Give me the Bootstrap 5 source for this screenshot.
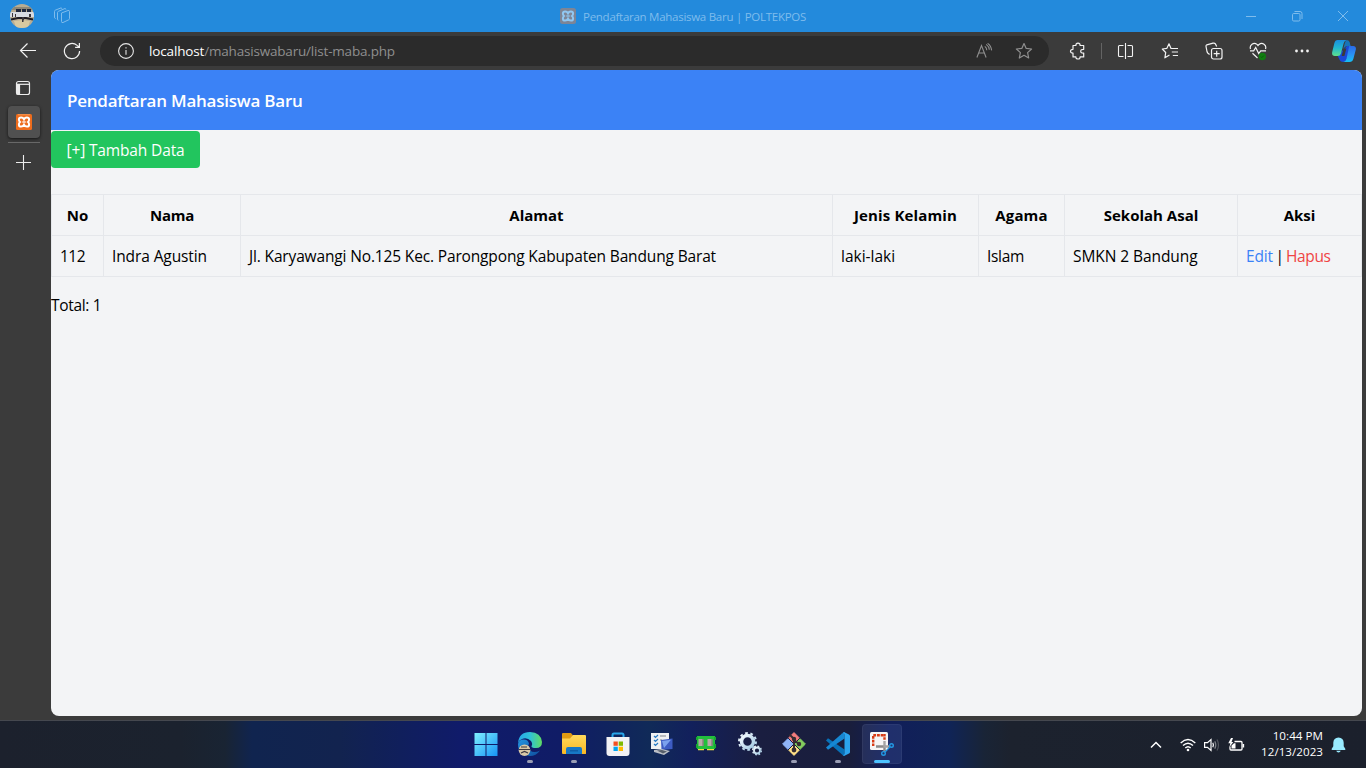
<!DOCTYPE html>
<html lang="id">
<head>
<meta charset="utf-8">
<meta name="viewport" content="width=device-width, initial-scale=1">
<title>Pendaftaran Mahasiswa Baru | POLTEKPOS</title>
<link href="https://cdn.jsdelivr.net/npm/bootstrap@5.3.0/dist/css/bootstrap.min.css" rel="stylesheet">
<style>
body{font-family:"Open Sans","Noto Sans",sans-serif;background:#3b3b3b;color:#000;height:768px;overflow:hidden}
svg{display:block;flex:none}
.titlebar{height:32px;background:#238adc;color:#7fbcec;padding-left:10px}
.workspaces{margin-left:19px}
.title-group{margin-left:489px}
.title-text{font-size:11.5px;letter-spacing:-.272px;line-height:16px;margin-left:7px;padding-top:1px}
.win-btn{width:46px}
.toolbar{height:38px;padding-left:6px;color:#f2f2f2}
.tool{width:44px;flex:none;display:flex;justify-content:center;align-items:center}
.address{margin:0 7px 0 6px;width:949px;height:30px;background:#2b2b2b;color:#8f8f8f;flex:none}
.info-icon{margin-left:18px}
.star-icon{margin:0 16px 0 22px}
.address-text{font-size:13.5px;letter-spacing:-.19px;line-height:18px;margin-left:15px}
.address-text b{font-weight:400;color:#fff;letter-spacing:-.15px}
.tool-sep{width:1px;height:16px;background:#646464;margin:0 2px 0 1px}
.copilot-cell{width:40px}
.stage{height:650px}
.tabs-col{width:51px;color:#ececec;padding-right:5px}
.tab-cell{height:36px}
.tab-on{width:32px;height:32px;background:#505050;box-shadow:0 1px 3px #151515;border-radius:4px;margin-left:2px}
.tab-rule{width:32px;height:1px;background:#686868;margin:4px 0 11px 2px}
.page{width:1311px;height:646px;background:#f3f4f6;border-radius:8px;overflow:hidden;font-size:15.5px;line-height:24px}
.page-head{height:60px;background:#3b82f6;font-size:17px;letter-spacing:-.225px;line-height:24px;padding-top:1px}
.btn-add{--bs-btn-color:#fff;--bs-btn-bg:#22c55e;--bs-btn-border-color:#22c55e;height:37px;width:149px;margin-top:1px;padding:1px 0 0;font-size:15.5px;letter-spacing:-.144px;line-height:37px;border:0;border-radius:4px}
.maba{table-layout:fixed;border-collapse:collapse;width:1311px;margin-top:26px}
.maba th,.maba td{border:1px solid #e5e7eb;padding:8px;height:41px;white-space:nowrap}
.maba th{text-align:center;font-size:15px}
.c-no{width:52px}.c-nama{width:137px}.c-alamat{width:592px}.c-jk{width:146px}.c-agama{width:86px}.c-asal{width:173px}
.ls-1{letter-spacing:-.105px}
.ls-2{letter-spacing:-.152px}
.ls-3{letter-spacing:-.3px}
.ls-4{letter-spacing:-.53px}
.ls-5{letter-spacing:-.076px}
.ls-w{letter-spacing:.135px}
.maba .act{word-spacing:-1.2px;letter-spacing:-.384px}
.act-edit{color:#3b82f6;text-decoration:none;letter-spacing:-.137px}
.act-del{color:#ef4444;text-decoration:none;letter-spacing:-.384px}
.total{margin-top:16px;letter-spacing:-.33px}
.taskbar{height:48px;border-top:1px solid #45484f;color:#fff;background:linear-gradient(90deg,#1c212d 0,#1b222e 180px,#192433 225px,#10244f 252px,#12234f 340px,#101f5c 400px,#101b6a 460px,#101c66 560px,#10255c 620px,#102a58 650px,#12205c 690px,#1a1e40 760px,#191e3c 850px,#111e5a 890px,#102456 950px,#192436 985px,#1c222e 1010px,#1b202c 100%)}
.apps{margin-left:464px}
.app{width:44px;height:47px;padding-top:11px;display:flex;flex-direction:column;align-items:center}
.app-tile{width:40px;height:40px;margin:3px 2px 0;padding-top:8px;background:rgba(150,170,240,.12);border-radius:4px;box-shadow:inset 0 0 0 1px rgba(255,255,255,.05)}
.dot{width:6px;height:3px;border-radius:2px;background:#9a9eb4;margin-top:4px;flex:none}
.dot-on{width:16px;background:#4cc2ff}
.tray{padding-right:20px}
.wifi{margin-left:18px}
.clock{font-size:11.6px;line-height:16px;text-align:right;width:68px;margin:-1px 8px 0 10px;letter-spacing:.04px}
</style>
</head>
<body>
<svg width="0" height="0" class="position-absolute"><defs>
<linearGradient id="win" x1="0" y1="0" x2="1" y2="1"><stop stop-color="#7ff0ff"/><stop offset="1" stop-color="#1694f5"/></linearGradient>
<linearGradient id="edge1" x1="0" y1="0" x2="1" y2="0"><stop stop-color="#27a8e8"/><stop offset=".5" stop-color="#2fc1d8"/><stop offset="1" stop-color="#5fdc62"/></linearGradient>
<linearGradient id="edge2" x1="0" y1="0" x2="1" y2="1"><stop stop-color="#2394e0"/><stop offset="1" stop-color="#0e4c9c"/></linearGradient>
<linearGradient id="fold" x1="0" y1="0" x2="0" y2="1"><stop stop-color="#ffd95c"/><stop offset="1" stop-color="#fbb823"/></linearGradient>
<linearGradient id="cp1" x1="0" y1="0" x2="0" y2="1"><stop stop-color="#1a8fe0"/><stop offset=".5" stop-color="#22b8d0"/><stop offset="1" stop-color="#5fe08c"/></linearGradient>
<linearGradient id="cp2" x1="0" y1="0" x2="0" y2="1"><stop stop-color="#2a6ae8"/><stop offset=".5" stop-color="#2b8ff5"/><stop offset="1" stop-color="#16c0f4"/></linearGradient>
<linearGradient id="gear" x1="0" y1="0" x2="1" y2="1"><stop stop-color="#f4faff"/><stop offset="1" stop-color="#a6cbe4"/></linearGradient>
<clipPath id="round"><circle cx="12" cy="12" r="12"/></clipPath>
<g id="xampp" fill="none" stroke="currentColor"><path d="M8 5.300Q7 3.400 5.200 3.400 2.900 3.400 2.900 5.600 2.900 7.100 4 8 2.900 8.900 2.900 10.400 2.900 12.600 5.200 12.600 7 12.600 8 10.700 9 12.600 10.800 12.600 13.100 12.600 13.100 10.400 13.100 8.900 12 8 13.100 7.100 13.100 5.600 13.100 3.400 10.800 3.400 9 3.400 8 5.300z" stroke-width="2"/><path d="M6.300 8h3.400" stroke-width="1.300"/></g>
</defs></svg>

<header class="titlebar d-flex align-items-center">
  <svg width="24" height="24" viewBox="0 0 24 24"><g clip-path="url(#round)"><path fill="#b9ad93" d="M0 0h24v24H0z"/><path fill="#8e8878" d="M0 3h24v3H0z"/><path fill="#d8dbe2" d="M0 8h24v5H0z"/><path fill="#20283e" d="M6 5h5v3H6zM12 5h4v3h-4zM17 5h4v3h-4z"/><path d="M1 15.500l7-1.500h8l7 1.500" fill="none" stroke="#201b22" stroke-width="1.800"/><path fill="#39343a" d="M2 9h1v4H2zM5 10h1v3H5zM19 10h2v3h-2zM12 13h2v5h-2z"/><path fill="#d8c9a0" d="M4 17l8-1 8 1-2 7H6z"/><path fill="#39343a" d="M12 15h1.500v3H12z"/></g></svg>
  <svg class="workspaces" width="18" height="18" viewBox="0 0 18 18" fill="none" stroke="currentColor"><path d="M8.500 6l6.500-2.500q1.500-.4 1.500 1v7q0 1-.8 1.300l-5.700 2.700q-1.500.5-1.500-1zM5.500 13.200l-1-.5V5.500q0-.8.8-1.100L12 1.500l1.200.9M2.700 11.500l-1.200-.7V4.300q0-.8.8-1.100L8 .9l1.200.7"/></svg>
  <div class="title-group d-flex align-items-center">
    <svg width="16" height="16" viewBox="0 0 16 16"><rect width="16" height="16" rx="2.500" fill="#7d8596"/><g color="#91c8f2"><use href="#xampp"/></g></svg>
    <span class="title-text text-nowrap">Pendaftaran Mahasiswa Baru | POLTEKPOS</span>
  </div>
  <div class="d-flex ms-auto">
    <div class="win-btn d-flex justify-content-center"><svg width="12" height="12" fill="none" stroke="currentColor"><path d="M1 6.500h10"/></svg></div>
    <div class="win-btn d-flex justify-content-center"><svg width="12" height="12" fill="none" stroke="currentColor"><rect x="1.500" y="3.500" width="7.500" height="7.500" rx="1.200"/><path d="M3.500 1.500h5.500q2 0 2 2V9"/></svg></div>
    <div class="win-btn d-flex justify-content-center"><svg width="12" height="12" fill="none" stroke="currentColor"><path d="M1 1l10 10M11 1L1 11"/></svg></div>
  </div>
</header>

<nav class="toolbar d-flex align-items-center">
  <div class="tool"><svg width="18" height="18" viewBox="0 0 18 18" fill="none" stroke="currentColor" stroke-width="1.200"><path d="M17 8.500H1.500M8.500 1.500l-7 7 7 7"/></svg></div>
  <div class="tool"><svg width="18" height="18" viewBox="0 0 18 18" fill="none" stroke="currentColor" stroke-width="1.200"><path d="M16.600 9a7.600 7.600 0 1 1-2.500-5.600L16 5M16.400 1v4.300h-4.300"/></svg></div>
  <div class="address rounded-pill d-flex align-items-center">
    <svg class="info-icon" width="16" height="16" viewBox="0 0 16 16" fill="none" stroke="#e6e6e6" stroke-width="1.100"><circle cx="8" cy="8" r="7.400"/><path d="M8 7v4.700M8 4.300v1.300"/></svg>
    <span class="address-text text-nowrap"><b>localhost</b>/mahasiswabaru/list-maba.php</span>
    <svg class="ms-auto" width="17" height="16" viewBox="0 0 17 16" fill="none" stroke="currentColor" stroke-width="1.100"><path d="M.9 14.500L5.500 2.500l4.600 12M2.500 10h6M8.800 3.400q1.900 1.300 2 3.800M10.200 1.400q2.900 2 3.100 5.300M11.600.4q3.500 2.300 4 7"/></svg>
    <svg class="star-icon" width="18" height="18" viewBox="0 0 18 18" fill="none" stroke="currentColor" stroke-width="1.200"><path d="M9 1.500l2.200 4.900 5.400.6-4 3.600 1.100 5.400L9 13.300 4.300 16l1.100-5.400-4-3.600 5.400-.6z" stroke-linejoin="round"/></svg>
  </div>
  <div class="tool"><svg width="18" height="18" viewBox="0 0 18 18" fill="none" stroke="currentColor" stroke-width="1.200"><path d="M4 3.500h2.900q-.1-2.300 2.100-2.300t2.100 2.300h3.600v3.800q-3-.2-3 1.900t3 1.900v3.800h-3.600q0 2.100-2.100 2.100t-2.100-2.100H4v-3.800q-2.500-.1-2.500-1.900T4 7.300z" stroke-linejoin="round"/></svg></div>
  <div class="tool-sep"></div>
  <div class="tool"><svg width="18" height="18" viewBox="0 0 18 18" fill="none" stroke="currentColor" stroke-width="1.100"><path d="M6.500 3.500h-4q-1 0-1 1v9q0 1 1 1h4M10.500 3.500h4q1 0 1 1v9q0 1-1 1h-4M8.500 1v16"/></svg></div>
  <div class="tool"><svg width="18" height="18" viewBox="0 0 18 18" fill="none" stroke="currentColor" stroke-width="1.200"><path d="M11.500 6.500H10L8 1.800 5.900 6.300 1.300 7l3.400 3.500-.8 5.300L8.500 13M11.500 6.500H17M10.800 10H17M11.800 13.500H17" stroke-linejoin="round"/></svg></div>
  <div class="tool"><svg width="18" height="18" viewBox="0 0 18 18" fill="none" stroke="currentColor" stroke-width="1.200"><rect x="6.500" y="6.500" width="10.500" height="10.500" rx="2"/><path d="M11.700 8.700v6M8.700 11.700h6M4.600 12.500L3 11.200Q2.300 10.600 2 9.500L1 4.300q-.2-1 .8-1.500L8 1.200q1.600-.4 2.400.7l1.300 2.600"/></svg></div>
  <div class="tool"><svg width="18" height="20" viewBox="0 0 18 20" fill="none" stroke="currentColor" stroke-width="1.200"><path d="M1.500 8Q.5 5 3 3.200t5 .2L9 4.500l1-1.100q2.500-1.800 5-.2T16.500 8M1 9.800h3.700l2-3.300 3 6 2-2.700H17M3.500 12.200L8.500 17"/><circle cx="13.300" cy="15.500" r="3.700" fill="#107c10" stroke="none"/><path d="M11.800 15.600l1 1 2-2" stroke="#075a07" stroke-width=".9"/></svg></div>
  <div class="tool"><svg width="16" height="4" fill="currentColor"><circle cx="2.500" cy="2" r="1.400"/><circle cx="8" cy="2" r="1.400"/><circle cx="13.500" cy="2" r="1.400"/></svg></div>
  <div class="copilot-cell d-flex justify-content-center"><svg width="24" height="24" viewBox="0 0 24 24"><path fill="#1a49d8" d="M5.500 16.500L9 13l7-7h2.500l-3.700 13.800q-.8 3.200-3.600 3.200-3 0-4-3z"/><path fill="#3b3b3b" d="M11.600 9.500h2.800l-2 7.500H9.600z"/><path fill="url(#cp2)" d="M17.200 7h4q3 .2 2.700 3.200l-2.500 9.600Q20.500 23 17.500 23h-6q2.400-.6 3-3.200z"/><path fill="url(#cp1)" d="M5.500 1h9.300q-2.500.8-3.200 3.400L9 14.400Q8.200 17 5.500 17H2.800Q-.2 16.700.1 13.600L2.400 4Q3.200 1 5.500 1z"/><path fill="#1874b8" d="M14.800 1q2.400 0 3 2.500L18.500 7h-3q-2.500 0-4.300 3l1.700-6Q13.500 1.500 14.800 1z"/></svg></div>
</nav>

<div class="stage d-flex">
  <aside class="tabs-col d-flex flex-column align-items-center">
    <div class="tab-cell d-flex align-items-center"><svg width="16" height="16" viewBox="0 0 16 16" fill="none" stroke="currentColor" stroke-width="1.200"><rect x="1.500" y="1.500" width="13" height="13" rx="2"/><path d="M2 4.300h12.500"/><path fill="currentColor" d="M2 4.500h2.500v9.700H2z"/></svg></div>
    <div class="tab-on d-flex align-items-center justify-content-center"><svg width="16" height="16" viewBox="0 0 16 16"><rect width="16" height="16" rx="1.500" fill="#ee6c1c"/><path d="M2 .8h12" stroke="#f9a468" stroke-width=".8"/><g color="#fff"><use href="#xampp"/></g></svg></div>
    <div class="tab-rule"></div>
    <svg width="16" height="16" fill="none" stroke="currentColor" stroke-width="1.100"><path d="M8.500 1v15M1 8.500h15"/></svg>
  </aside>
  <main class="page">
    <div class="page-head d-flex align-items-center px-3 text-white fw-semibold">Pendaftaran Mahasiswa Baru</div>
    <a class="btn btn-add d-block" href="#">[+] Tambah Data</a>
    <table class="maba">
      <colgroup><col class="c-no"><col class="c-nama"><col class="c-alamat"><col class="c-jk"><col class="c-agama"><col class="c-asal"><col></colgroup>
      <thead><tr><th>No</th><th class="ls-3">Nama</th><th>Alamat</th><th class="ls-w">Jenis Kelamin</th><th class="ls-w">Agama</th><th>Sekolah Asal</th><th>Aksi</th></tr></thead>
      <tbody><tr><td class="ls-4">112</td><td class="ls-1">Indra Agustin</td><td class="ls-2">Jl. Karyawangi No.125 Kec. Parongpong Kabupaten Bandung Barat</td><td>laki-laki</td><td class="ls-3">Islam</td><td class="ls-5">SMKN 2 Bandung</td><td class="act"><a class="act-edit" href="#">Edit</a> | <a class="act-del" href="#">Hapus</a></td></tr></tbody>
    </table>
    <p class="total mb-0">Total: 1</p>
  </main>
</div>

<footer class="taskbar d-flex">
  <div class="apps d-flex">
    <div class="app"><svg width="24" height="24"><path fill="url(#win)" d="M.5 1h11v11H.5zM12.500 1h11v11h-11zM.5 13h11v11H.5zM12.500 13h11v11h-11z" /></svg></div>
    <div class="app"><svg width="24" height="24" viewBox="0 0 24 24"><path fill="url(#edge2)" d="M0 12Q1 7 6 7.500q4 0 5 4-2 4 1 7 4 3 10 0-4 5.500-10 5.500Q0 23 0 12z"/><path fill="url(#edge1)" d="M0 11Q1 0 12 0q11 .5 12 10 0 6-6 6-5 0-4.500-2Q15 12 13 9 9 5 4 7 1 8 0 11z"/><circle cx="6.500" cy="18.200" r="5.800" fill="#d8c8a7"/><path d="M1 17.500h11M3 15h6M3 21l3.500-1.500L10 21" stroke="#3c3840" stroke-width="1.200" fill="none"/></svg><span class="dot"></span></div>
    <div class="app"><svg width="24" height="24"><path fill="#e09a12" d="M1 1h8l2 2.500V9H0V2q0-1 1-1z"/><path fill="url(#fold)" d="M0 6.500h8L11 3h12q1 0 1 1v17.500q0 .5-1 .5H1q-1 0-1-1z"/><path fill="#1778c6" d="M4 22v-5q0-2 2-2h12q2 0 2 2v5z"/><path fill="#0f5ea8" d="M8 18h8v1.500H8z"/></svg><span class="dot"></span></div>
    <div class="app"><svg width="24" height="24"><path d="M6.500 6V3q0-1.500 1.500-1.500h8q1.500 0 1.500 1.500v3" fill="none" stroke="#29a7ea" stroke-width="2"/><path fill="#f2f2f4" d="M.5 5h23v16q0 3-3 3h-17q-3 0-3-3z"/><path fill="#f25022" d="M7.500 9.500h4.300v4.300H7.500z"/><path fill="#7fba00" d="M12.700 9.500H17v4.300h-4.300z"/><path fill="#00a4ef" d="M7.500 14.700h4.300V19H7.500z"/><path fill="#ffb900" d="M12.700 14.700H17V19h-4.300z"/></svg></div>
    <div class="app"><svg width="24" height="24"><path fill="#eef0f2" d="M1 1h18v16H1z"/><path d="M4 4l1.500 1.500L8 3M4 8l1.500 1.500L8 7M4 12l1.500 1.500L8 11" fill="none" stroke="#287ac2" stroke-width="1.200"/><path d="M10 4h6M10 8h2" stroke="#80858b"/><path fill="#3d5bc2" d="M11 8l11.500-1.500V17l-11 1z"/><path fill="#7ba1ee" d="M12 9l9-1.200L14 16z"/><path fill="#b9bec5" d="M4 18l8-1 8 2-6 4-10-3z"/><path fill="#555e6a" d="M7 18.500l5-.5 5 1.500-4 2z"/></svg></div>
    <div class="app"><svg width="24" height="24"><path fill="#22c03c" d="M3 4h18v13H3z"/><path fill="#17a832" d="M2 5h2v3H2zM2 12h2v4H2zM20 5h2v3h-2zM20 12h2v4h-2z"/><path fill="#b7aaa7" d="M4.500 7h5v7h-5zM13.500 7h5v7h-5z"/><path fill="#776f6c" d="M8.500 7h1v7h-1zM17.500 7h1v7h-1z"/><path fill="#eee245" d="M4 17h6v1.300H4zM13 17h7v1.300h-7z"/></svg></div>
    <div class="app"><svg width="24" height="24" fill="none" stroke="url(#gear)"><circle cx="9.500" cy="9.500" r="6" stroke-width="3.500"/><circle cx="9.500" cy="9.500" r="8.500" stroke-width="2" stroke-dasharray="2.700 2.640"/><circle cx="19" cy="18.500" r="3" stroke-width="1.800"/><circle cx="19" cy="18.500" r="4.300" stroke-width="1.500" stroke-dasharray="1.700 1.680"/></svg></div>
    <div class="app"><svg width="24" height="24" stroke-linejoin="round" stroke-width="1"><path fill="#f37d7d" stroke="#f37d7d" d="M12 .6l5.200 5.200L12 11 6.800 5.800z"/><path fill="#8fb4f7" stroke="#8fb4f7" d="M5.800 6.800L11 12l-5.200 5.200L.6 12z"/><path fill="#83cb5e" stroke="#83cb5e" d="M18.200 6.800l5.200 5.200-5.200 5.200L13 12z"/><path fill="#ffe187" stroke="#ffe187" d="M12 13l5.200 5.200-5.200 5.200-5.200-5.200z"/><path d="M7.500 2.500L12 7v11M12 8l5 4" fill="none" stroke="#362d32" stroke-width="2"/><circle cx="12" cy="7" r="2.200" fill="#362d32"/><circle cx="12" cy="18" r="2.400" fill="#362d32"/><circle cx="17" cy="12" r="2.200" fill="#362d32"/></svg><span class="dot"></span></div>
    <div class="app"><svg width="24" height="24"><path fill="#0871b8" d="M2 6.300L0 8.500 16 22.500l2.500 1.300V17.500z"/><path fill="#1687d2" d="M2 17.700L0 15.500 16 1.500 18.500.2V6.500z"/><path fill="#2ba4ee" d="M18 0l5 2.400q1 .6 1 1.600v16q0 1-1 1.600L18 24l-1.500-1q2 .2 2-1.500v-19Q18.500.8 16.500 1z"/></svg><span class="dot"></span></div>
    <div class="app app-tile"><svg width="24" height="24"><path fill="#f6f6f6" d="M0 1.500Q0 0 1.500 0h15Q18 0 18 1.500V18H1.500Q0 18 0 16.500z"/><path d="M13.500 3.200H3.200V14" fill="none" stroke="#d83b16" stroke-width="2.400" stroke-dasharray="2.800 .9"/><path d="M14.500 2v6" stroke="#d83b16" stroke-width="2.400" stroke-dasharray="2.500 .8"/><path d="M6 14.500h8.500V20" fill="none" stroke="#8b8b8b" stroke-width="2.400"/><path d="M14.500 9v5.500H20" fill="none" stroke="#a5a5a5" stroke-width="2.400"/><circle cx="21.500" cy="13.500" r="1.800" fill="none" stroke="#2298e4" stroke-width="1.400"/><circle cx="13.500" cy="21.400" r="1.800" fill="none" stroke="#2298e4" stroke-width="1.400"/><path d="M15 20l5-5" stroke="#2298e4" stroke-width="1.300"/></svg><span class="dot dot-on"></span></div>
  </div>
  <div class="tray d-flex align-items-center ms-auto">
    <svg width="12" height="8" fill="none" stroke="#fff" stroke-width="1.500"><path d="M1 6.500l5-5 5 5"/></svg>
    <svg class="wifi" width="16" height="14" viewBox="0 0 16 14" fill="none" stroke="#fff" stroke-width="1.400"><path d="M.7 5q7.300-7 14.600 0M3 7.600q5-4.800 10 0M5.300 10.100q2.700-2.600 5.400 0"/><circle cx="8" cy="12" r="1.300" fill="#fff" stroke="none"/></svg>
    <svg class="ms-2" width="16" height="14" viewBox="0 0 16 14" fill="none" stroke="#fff" stroke-width="1.200"><path d="M.6 4.700h2.900L7 1.500v11L3.500 9.300H.6zM8.800 4.800q1.200 2.200 0 4.400"/><path d="M10.800 3.300q2 3.700 0 7.400" stroke="#7d8087"/><path d="M13 1.500q3 5.500 0 11" stroke="#50545c"/></svg>
    <svg class="ms-2" width="17" height="14" viewBox="0 0 17 14" fill="none" stroke="#fff" stroke-width="1.300"><path d="M6.500 3.500H13q1 0 1 1v6.500q0 1-1 1H3q-1 0-1-1V8.500M15.500 6v3.500"/><path fill="#fff" stroke="none" d="M3 0L.3 5.300h2L1.500 9 5.300 4H3.500L5 0zM3.500 7.500L6 5.300h1.500v5.200h-4z"/></svg>
    <div class="clock"><div>10:44 PM</div><div class="text-nowrap">12/13/2023</div></div>
    <svg width="15" height="16" viewBox="0 0 15 16" fill="#99ebff"><path d="M7.500.5q5 .3 5.200 5.200v3.600l1.700 2.800q.2.900-.7.900H1.300q-.9 0-.7-.9l1.700-2.800V5.700Q2.500.8 7.500.5zM5.200 13.800h4.600q-.6 1.800-2.300 1.800t-2.300-1.800z"/></svg>
  </div>
</footer>
<script src="https://cdn.jsdelivr.net/npm/bootstrap@5.3.0/dist/js/bootstrap.bundle.min.js"></script>
</body>
</html>
